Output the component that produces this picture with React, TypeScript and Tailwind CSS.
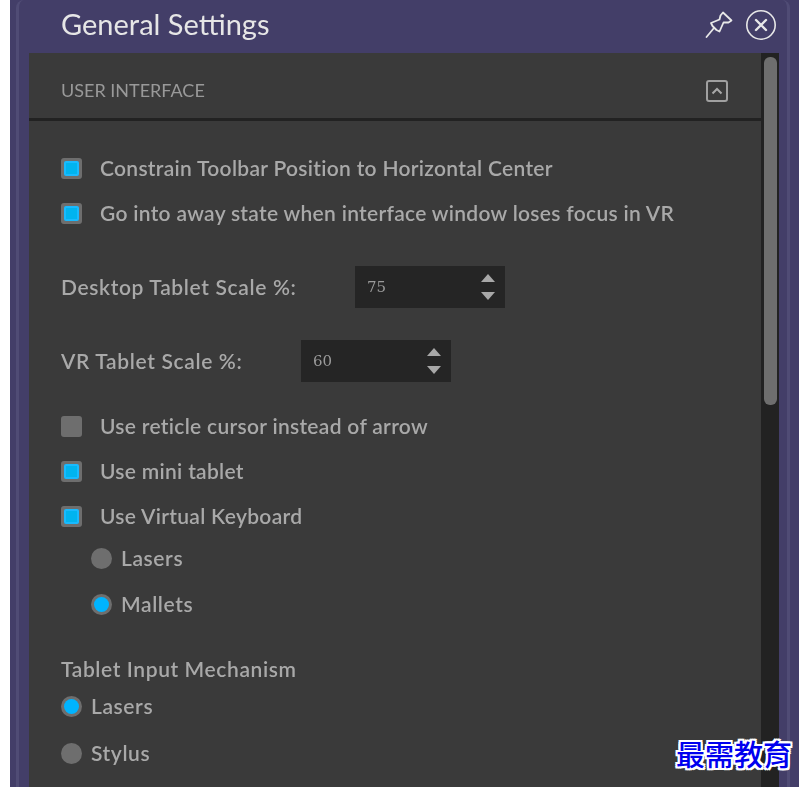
import { useState } from "react";

const font = { fontFamily: '"Lato", "Open Sans", sans-serif' };
const labelClass = "text-[21px] font-semibold text-[#a9a9a9] whitespace-nowrap";

function Check({ on, label }: { on: boolean; label: string }) {
    return (
        <div className="flex items-center h-[24px]">
            <div className="w-[21px] h-[21px] rounded-[3px] bg-[#6e6e6e] flex items-center justify-center">
                {on && (
                    <div className="w-[15px] h-[15px] rounded-[2px] bg-[#19baff] flex items-center justify-center">
                        <div className="w-[11px] h-[11px] bg-[#00b4ef]" />
                    </div>
                )}
            </div>
            <span className={`ml-[18px] tracking-[0.3px] ${labelClass}`}>{label}</span>
        </div>
    );
}

function Radio({ on, label }: { on: boolean; label: string }) {
    return (
        <div className="flex items-center h-[24px]">
            <div className="w-[21px] h-[21px] rounded-full bg-[#6e6e6e] flex items-center justify-center">
                {on && <div className="w-[15px] h-[15px] rounded-full bg-[#00b4ff]" />}
            </div>
            <span className={`ml-[9px] tracking-[0.6px] ${labelClass}`}>{label}</span>
        </div>
    );
}

function Spinner({ value }: { value: number }) {
    return (
        <div className="w-[150px] h-[42px] bg-[#252525] flex items-center justify-between pl-[12px] pr-[10px]">
            <span className="text-[15px] text-[#9a9a9a]" style={{ fontFamily: '"DejaVu Serif", serif' }}>{value}</span>
            <div className="flex flex-col gap-[10px]">
                <div className="w-0 h-0 border-x-[7px] border-x-transparent border-b-[8px] border-b-[#a8a8a8]" />
                <div className="w-0 h-0 border-x-[7px] border-x-transparent border-t-[8px] border-t-[#a8a8a8]" />
            </div>
        </div>
    );
}

export default function App() {
    const [title] = useState("General Settings");

    return (
        <div className="h-[787px] w-[799px] overflow-hidden bg-white pl-[10px] relative" style={font}>
            <div className="h-full bg-[#433e68] pl-[6px] blur-[0.4px]">
                <div className="h-full w-[774px] border-x-[3px] border-[#504c75] rounded-t-[8px] flex flex-col">
                    <div className="h-[53px] flex items-center justify-between pl-[42px] shrink-0">
                        <h1 className="text-[29px] text-[#e6e6e6] leading-none pb-[6px]">{title}</h1>
                        <div className="flex items-center gap-[11px] pr-[10px] pb-[3px]">
                            <svg width="30" height="30" viewBox="0 0 30 30" fill="none" stroke="#e8e8e8" strokeWidth="1.8" strokeLinejoin="round" strokeLinecap="round">
                                <path d="M19 2.5 L27.5 10.5 L24.5 12.5 L19.5 12.5 L15.5 21.5 L12.5 20 L8.5 16 L7 13 L15.5 9.5 L16.5 5.5 Z" />
                                <path d="M10 18 L2.5 27" />
                            </svg>
                            <svg width="32" height="32" viewBox="0 0 32 32" fill="none" stroke="#e8e8e8" strokeLinecap="round">
                                <circle cx="16" cy="16" r="14.2" strokeWidth="1.6" />
                                <path d="M11 11 L21 21 M21 11 L11 21" strokeWidth="2.4" />
                            </svg>
                        </div>
                    </div>
                    <div className="ml-[10px] w-[750px] flex-1 bg-[#3a3a3a] flex relative">
                        <div className="flex-1 min-w-0">
                            <div className="h-[68px] flex items-center justify-between pl-[32px] pr-[33px] pt-[10px] border-b-[3px] border-[#222222]">
                                <span className="text-[18px] text-[#999999]">USER INTERFACE</span>
                                <div className="w-[22px] h-[22px] rounded-[3px] border-2 border-[#a0a0a0] flex items-center justify-center">
                                    <svg width="12" height="8" viewBox="0 0 12 8" fill="none" stroke="#a8a8a8" strokeWidth="2">
                                        <path d="M1.5 6.5 L6 2 L10.5 6.5" />
                                    </svg>
                                </div>
                            </div>
                            <div className="pl-[32px] pt-[35px]">
                                <div className="flex flex-col gap-[21px]">
                                    <Check on label="Constrain Toolbar Position to Horizontal Center" />
                                    <Check on label="Go into away state when interface window loses focus in VR" />
                                </div>
                                <div className="flex items-center mt-[41px] h-[42px]">
                                    <span className={`w-[294px] tracking-[0.65px] ${labelClass}`}>Desktop Tablet Scale %:</span>
                                    <Spinner value={75} />
                                </div>
                                <div className="flex items-center mt-[32px] h-[42px]">
                                    <span className={`w-[240px] tracking-[0.65px] ${labelClass}`}>VR Tablet Scale %:</span>
                                    <Spinner value={60} />
                                </div>
                                <div className="flex flex-col gap-[21px] mt-[32px]">
                                    <Check on={false} label="Use reticle cursor instead of arrow" />
                                    <Check on label="Use mini tablet" />
                                    <Check on label="Use Virtual Keyboard" />
                                </div>
                                <div className="flex flex-col gap-[22px] ml-[30px] mt-[18px]">
                                    <Radio on={false} label="Lasers" />
                                    <Radio on label="Mallets" />
                                </div>
                                <div className={`mt-[41px] h-[24px] leading-[24px] tracking-[0.6px] ${labelClass}`}>Tablet Input Mechanism</div>
                                <div className="flex flex-col gap-[23px] mt-[13px]">
                                    <Radio on label="Lasers" />
                                    <Radio on={false} label="Stylus" />
                                </div>
                            </div>
                        </div>
                        <div className="w-[18px] bg-[#222222] shrink-0 pt-[4px] pl-[3px]">
                            <div className="w-[13px] h-[348px] rounded-[6px] bg-[#6e6e6e]" />
                        </div>
                    </div>
                </div>
            </div>
            <div
                className="absolute left-[676px] top-[739px] text-[29px] font-medium text-[#0000ee] leading-none whitespace-nowrap [text-shadow:-2px_0_0_#fff,2px_0_0_#fff,0_-2px_0_#fff,0_2px_0_#fff,-2px_-2px_0_#fff,2px_2px_0_#fff,-2px_2px_0_#fff,2px_-2px_0_#fff]"
                style={{ fontFamily: '"Noto Sans CJK TC", sans-serif' }}
            >
                最需教育
            </div>
        </div>
    );
}
